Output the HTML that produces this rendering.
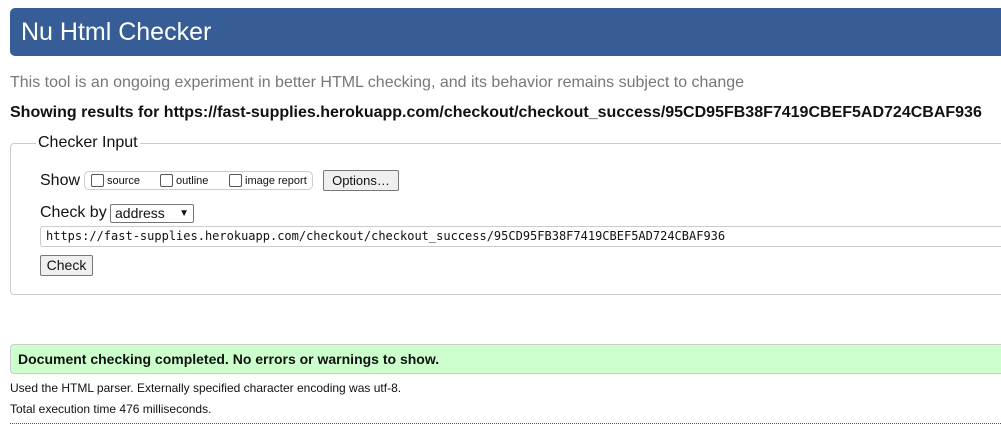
<!DOCTYPE html>
<html><head><meta charset="utf-8"><style>
body{margin:0;width:1001px;height:425px;overflow:hidden;background:#fff;font-family:"Liberation Sans",Arial,sans-serif;position:relative;color:#111}
.a{position:absolute;white-space:nowrap}
#hd{left:10px;top:8px;width:1000px;height:48px;background:#365d95;border-radius:5px 0 0 5px}
#hd span{position:absolute;left:11px;top:10px;font-size:25px;color:#fff}
.box{border:1px solid #ccc}
</style></head><body>
<div id="hd" class="a"><span>Nu Html Checker</span></div>
<div class="a" style="left:10px;top:74px;font-size:16px;color:#777">This tool is an ongoing experiment in better HTML checking, and its behavior remains subject to change</div>
<div class="a" style="left:10px;top:104px;font-size:16px;font-weight:bold">Showing results for https://fast-supplies.herokuapp.com/checkout/checkout_success/95CD95FB38F7419CBEF5AD724CBAF936</div>
<div class="a box" style="left:10px;top:143px;width:1000px;height:150px;border-radius:4px"></div>
<div class="a" style="left:36px;top:134px;font-size:16px;background:#fff;padding:0 2px">Checker Input</div>
<div class="a" style="left:40px;top:172px;font-size:16px">Show</div>
<div class="a box" style="left:84px;top:171px;width:227px;height:17px;border-radius:5px"></div>
<div class="a" style="left:91px;top:174px;width:11px;height:11px;border:1px solid #555;border-radius:2px"></div>
<div class="a" style="left:107px;top:175px;font-size:11px">source</div>
<div class="a" style="left:160px;top:174px;width:11px;height:11px;border:1px solid #555;border-radius:2px"></div>
<div class="a" style="left:176px;top:175px;font-size:11px">outline</div>
<div class="a" style="left:229px;top:174px;width:11px;height:11px;border:1px solid #555;border-radius:2px"></div>
<div class="a" style="left:245px;top:175px;font-size:11px">image report</div>
<div class="a" style="left:323px;top:170px;width:74px;height:19px;border:1px solid #777;background:#efefef;border-radius:2px;font-size:13px;text-align:center;line-height:19px">Options…</div>
<div class="a" style="left:40px;top:204px;font-size:16px">Check by</div>
<div class="a" style="left:110px;top:204px;width:78px;height:17px;border:1px solid #767676;border-radius:2px;font-size:14px;line-height:17px;padding-left:4px;box-sizing:content-box">address<span style="position:absolute;right:4px;top:0;font-size:10px">&#9660;</span></div>
<div class="a box" style="left:40px;top:226px;width:970px;height:19px;border-radius:3px"></div>
<div class="a" style="left:46px;top:229px;font-size:12px;font-family:'DejaVu Sans Mono','Liberation Mono',monospace">https://fast-supplies.herokuapp.com/checkout/checkout_success/95CD95FB38F7419CBEF5AD724CBAF936</div>
<div class="a" style="left:40px;top:255px;width:51px;height:19px;border:1px solid #777;background:#efefef;border-radius:2px;font-size:14px;text-align:center;line-height:19px">Check</div>
<div class="a" style="left:10px;top:344px;width:1000px;height:28px;background:#ccffcc;border:1px solid #ccc;border-radius:4px 0 0 4px"></div>
<div class="a" style="left:18px;top:351px;font-size:14px;font-weight:bold">Document checking completed. No errors or warnings to show.</div>
<div class="a" style="left:10px;top:381px;font-size:12px">Used the HTML parser. Externally specified character encoding was utf-8.</div>
<div class="a" style="left:10px;top:402px;font-size:12px">Total execution time 476 milliseconds.</div>
<div class="a" style="left:10px;top:423px;width:991px;border-top:1px dotted #555"></div>
</body></html>
